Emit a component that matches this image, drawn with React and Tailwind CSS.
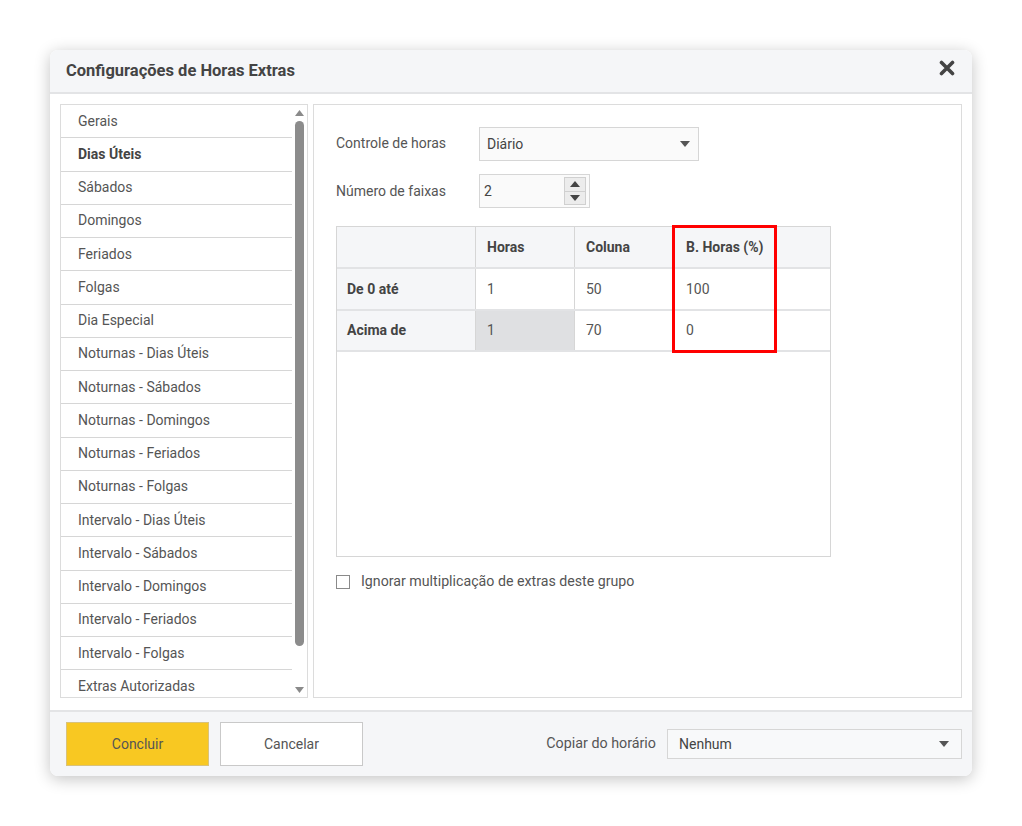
import { useState } from "react";

const items = [
  "Gerais",
  "Dias Úteis",
  "Sábados",
  "Domingos",
  "Feriados",
  "Folgas",
  "Dia Especial",
  "Noturnas - Dias Úteis",
  "Noturnas - Sábados",
  "Noturnas - Domingos",
  "Noturnas - Feriados",
  "Noturnas - Folgas",
  "Intervalo - Dias Úteis",
  "Intervalo - Sábados",
  "Intervalo - Domingos",
  "Intervalo - Feriados",
  "Intervalo - Folgas",
  "Extras Autorizadas",
];

function Caret() {
  return (
    <svg width="10" height="6" viewBox="0 0 10 6">
      <path d="M0 0h10L5 6z" fill="#555" />
    </svg>
  );
}

export default function App() {
  const [active] = useState("Dias Úteis");
  const [checked, setChecked] = useState(false);

  return (
    <div
      className="w-[1022px] h-[826px] bg-white pt-[50px] pl-[50px] text-[#555]"
      style={{ fontFamily: "Roboto, 'Liberation Sans', sans-serif" }}
    >
      <div className="w-[922px] h-[726px] rounded-lg bg-white shadow-[0_3px_16px_rgba(0,0,0,0.24)] flex flex-col overflow-hidden">
        {/* Header */}
        <div className="h-[44px] shrink-0 bg-[#f5f6f8] border-b-2 border-[#e3e4e6] flex items-center justify-between pl-4 pr-[17px]">
          <h2 className="text-[16.5px] font-bold text-[#444]">Configurações de Horas Extras</h2>
          <svg width="16" height="16" viewBox="0 0 16 16" className="-mt-[6px]">
            <path d="M2.5 2.5l11 11M13.5 2.5l-11 11" stroke="#444" strokeWidth="3.6" strokeLinecap="round" />
          </svg>
        </div>

        {/* Body */}
        <div className="flex-1 flex gap-[5px] px-[10px] pt-[10px] pb-[12px]">
          {/* Left list */}
          <div className="w-[248px] h-[594px] border border-[#dcdcdc] flex overflow-hidden">
            <div className="flex-1 flex flex-col">
              {items.map((it) => (
                <div
                  key={it}
                  className={`h-[33.25px] shrink-0 border-b border-[#d6d6d6] flex items-center pl-[17px] text-[14px] ${
                    it === active ? "font-bold text-[#444]" : "text-[#555]"
                  }`}
                >
                  {it}
                </div>
              ))}
            </div>
            <div className="w-[15px] flex flex-col items-center pt-[5px] pb-[4px]">
              <svg width="9" height="6" viewBox="0 0 9 6">
                <path d="M0 6L4.5 0 9 6z" fill="#8a8a8a" />
              </svg>
              <div className="w-[9px] h-[525px] mt-[5px] rounded-t-full rounded-b-full bg-[#8c8c8c]" />
              <div className="flex-1" />
              <svg width="9" height="6" viewBox="0 0 9 6">
                <path d="M0 0h9L4.5 6z" fill="#8a8a8a" />
              </svg>
            </div>
          </div>

          {/* Right panel */}
          <div className="flex-1 h-[594px] border border-[#dcdcdc] pl-[22px] pt-[22px]">
            <div className="flex items-center">
              <span className="w-[143px] text-[14px] -mt-[2px]">Controle de horas</span>
              <div className="w-[220px] h-[34px] border border-[#d6d6d6] bg-[#fafafa] flex items-center justify-between pl-[7px] pr-[8px] text-[14px] text-[#444]">
                <span>Diário</span>
                <Caret />
              </div>
            </div>
            <div className="flex items-center mt-[13px]">
              <span className="w-[143px] text-[14px]">Número de faixas</span>
              <div className="w-[111px] h-[34px] border border-[#d6d6d6] bg-[#fafafa] flex items-center justify-between pl-[4px] pr-[3px] text-[14px] text-[#444]">
                <span>2</span>
                <div className="w-[22px] h-[28px] border border-[#d0d0d0] bg-[#ececec] flex flex-col">
                  <div className="flex-1 flex items-center justify-center border-b border-[#d0d0d0]">
                    <svg width="10" height="6" viewBox="0 0 10 6">
                      <path d="M0 6L5 0l5 6z" fill="#444" />
                    </svg>
                  </div>
                  <div className="flex-1 flex items-center justify-center">
                    <svg width="10" height="6" viewBox="0 0 10 6">
                      <path d="M0 0h10L5 6z" fill="#444" />
                    </svg>
                  </div>
                </div>
              </div>
            </div>

            {/* Table */}
            <div className="mt-[18px] w-[495px] h-[331px] border border-[#d6d6d6] relative">
              <div className="flex h-[42px] bg-[#f5f6f8] border-b-2 border-[#e2e3e5] text-[14px] font-bold text-[#444]">
                <div className="w-[139px] border-r border-[#d6d6d6]" />
                <div className="w-[99px] border-r border-[#d6d6d6] flex items-center pl-[11px]">Horas</div>
                <div className="w-[99px] border-r border-[#d6d6d6] flex items-center pl-[11px]">Coluna</div>
                <div className="w-[101px] flex items-center pl-[12px]">B. Horas (%)</div>
              </div>
              <div className="flex h-[42px] border-b-2 border-[#e2e3e5] text-[14px]">
                <div className="w-[139px] bg-[#f5f6f8] border-r border-[#d6d6d6] flex items-center pl-[10px] font-bold text-[#444]">De 0 até</div>
                <div className="w-[99px] border-r border-[#d6d6d6] flex items-center pl-[11px]">1</div>
                <div className="w-[99px] border-r border-[#d6d6d6] flex items-center pl-[11px]">50</div>
                <div className="w-[101px] flex items-center pl-[12px]">100</div>
              </div>
              <div className="flex h-[41px] border-b-2 border-[#e2e3e5] text-[14px]">
                <div className="w-[139px] bg-[#f5f6f8] border-r border-[#d6d6d6] flex items-center pl-[10px] font-bold text-[#444]">Acima de</div>
                <div className="w-[99px] bg-[#dfe0e2] border-r border-[#d6d6d6] flex items-center pl-[11px]">1</div>
                <div className="w-[99px] border-r border-[#d6d6d6] flex items-center pl-[11px]">70</div>
                <div className="w-[101px] flex items-center pl-[12px]">0</div>
              </div>
              <div className="absolute left-[335px] top-[-2px] w-[105px] h-[128px] border-[3px] border-[#ff0000]" />
            </div>

            <label className="flex items-center mt-[14px] text-[14.2px] cursor-pointer">
              <input
                type="checkbox"
                checked={checked}
                onChange={(e) => setChecked(e.target.checked)}
                className="appearance-none w-[14px] h-[14px] border border-[#8a8a8a] bg-white mr-[11px]"
              />
              Ignorar multiplicação de extras deste grupo
            </label>
          </div>
        </div>

        {/* Footer */}
        <div className="h-[66px] shrink-0 bg-[#f5f6f8] border-t-2 border-[#e3e4e6] flex items-center pl-4 pr-[10px]">
          <button className="w-[143px] h-[44px] bg-[#f8c822] border border-[#d9c27a] text-[14px] text-[#555]">Concluir</button>
          <button className="w-[143px] h-[44px] ml-[11px] bg-white border border-[#c9c9c9] text-[14px] text-[#555]">Cancelar</button>
          <div className="flex-1" />
          <span className="text-[14.3px] mr-[11px]">Copiar do horário</span>
          <div className="w-[295px] h-[30px] border border-[#d6d6d6] bg-[#f8f9fa] flex items-center justify-between pl-[11px] pr-[12px] text-[14px] text-[#444]">
            <span>Nenhum</span>
            <Caret />
          </div>
        </div>
      </div>
    </div>
  );
}
